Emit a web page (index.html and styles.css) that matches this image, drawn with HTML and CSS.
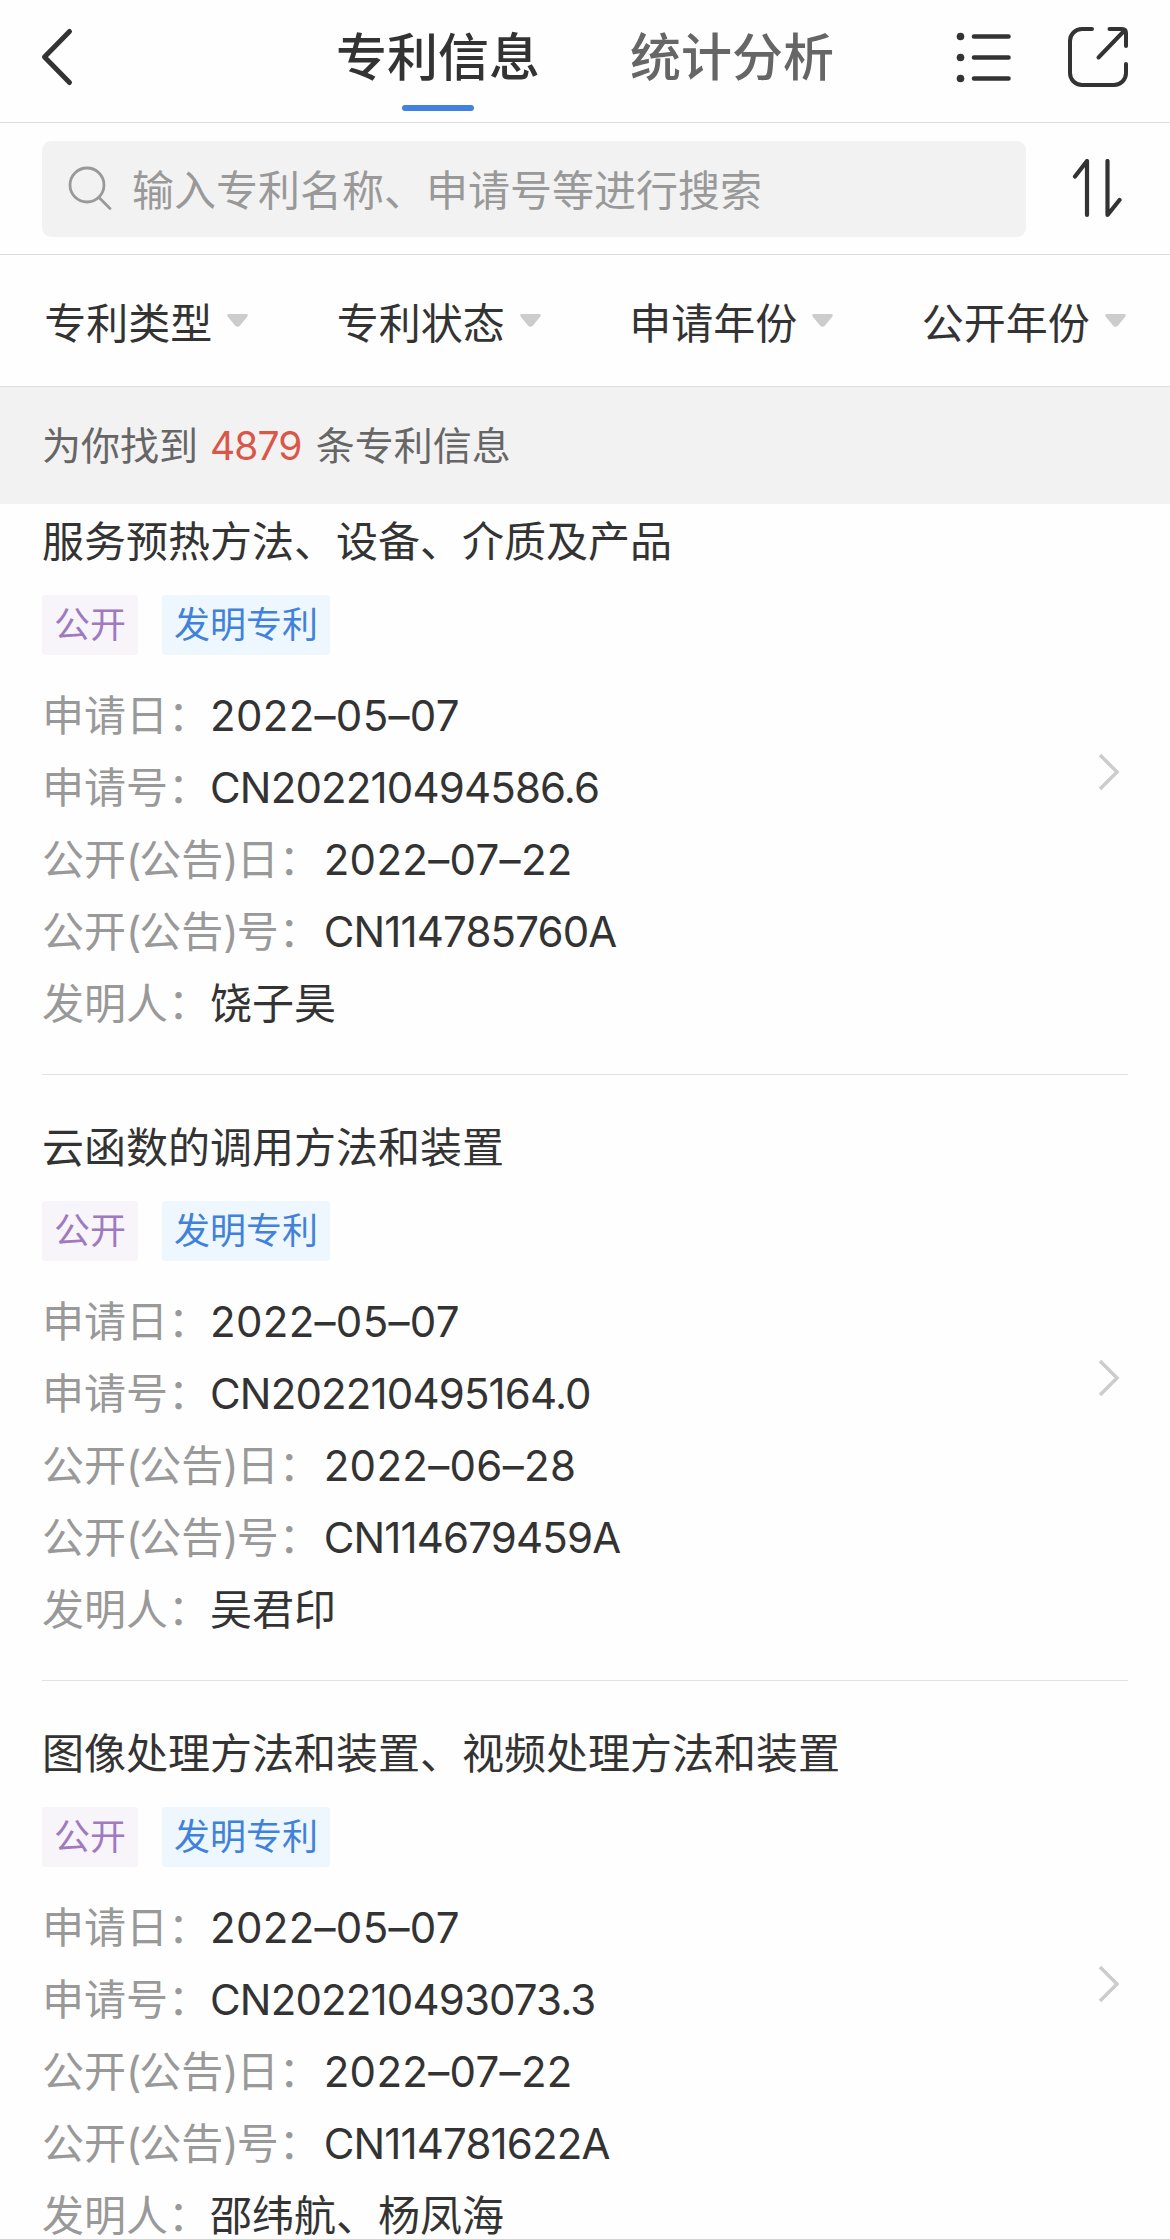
FILE: index.html
```html
<!DOCTYPE html>
<html lang="zh-CN">
<head>
    <meta charset="UTF-8">
    <title>专利信息</title>
    <link rel="stylesheet" href="styles.css">
</head>
<body>
    <header class="header">
        <svg class="back" width="34" height="60" viewBox="0 0 34 60" fill="none" stroke="#333" stroke-width="5" stroke-linecap="round" stroke-linejoin="round"><path d="M29.500 4.500 4.500 30 29.500 55.500"/></svg>
        <nav class="tabs">
            <div class="tab active">专利信息</div>
            <div class="tab">统计分析</div>
        </nav>
        <div class="actions">
            <svg width="60" height="60" viewBox="0 0 60 60" fill="none" stroke="#333" stroke-width="4.600" stroke-linecap="round">
                <path d="M20 9.500H54.500M20 30.500H54.500M20 51.500H54.500"/>
                <g fill="#333" stroke="none"><circle cx="6.500" cy="9.500" r="3.800"/><circle cx="6.500" cy="30.500" r="3.800"/><circle cx="6.500" cy="51.500" r="3.800"/></g>
            </svg>
            <svg width="60" height="60" viewBox="0 0 60 60" fill="none" stroke="#333" stroke-width="4" stroke-linecap="round" stroke-linejoin="round">
                <path d="M24 2H14A12 12 0 0 0 2 14V46A12 12 0 0 0 14 58H46A12 12 0 0 0 58 46V37"/>
                <path d="M41.500 2H54Q58 2 58 6V19M56.500 3.500 30.500 30.500"/>
            </svg>
        </div>
    </header>

    <div class="search-bar">
        <div class="search-box">
            <svg width="44" height="46" viewBox="0 0 44 46" fill="none" stroke="#999" stroke-width="2.800" stroke-linecap="round"><circle cx="19" cy="20" r="17"/><path d="M31.500 33 42 43.500"/></svg>
            <span>输入专利名称、申请号等进行搜索</span>
        </div>
        <svg class="sort" width="50" height="60" viewBox="0 0 50 60" fill="none" stroke="#333" stroke-width="4.200" stroke-linecap="round" stroke-linejoin="round"><path d="M3 17.500 15 2V56M35.500 2V56L47.500 41"/></svg>
    </div>

    <div class="filters">
        <div class="filter">专利类型<svg class="arrow" viewBox="0 0 21 13"><path d="M2 0H19Q22 0 20 3L13 11.500Q10.500 14 8 11.500L1 3Q-1 0 2 0Z"/></svg></div>
        <div class="filter">专利状态<svg class="arrow" viewBox="0 0 21 13"><path d="M2 0H19Q22 0 20 3L13 11.500Q10.500 14 8 11.500L1 3Q-1 0 2 0Z"/></svg></div>
        <div class="filter">申请年份<svg class="arrow" viewBox="0 0 21 13"><path d="M2 0H19Q22 0 20 3L13 11.500Q10.500 14 8 11.500L1 3Q-1 0 2 0Z"/></svg></div>
        <div class="filter">公开年份<svg class="arrow" viewBox="0 0 21 13"><path d="M2 0H19Q22 0 20 3L13 11.500Q10.500 14 8 11.500L1 3Q-1 0 2 0Z"/></svg></div>
    </div>

    <div class="summary">为你找到<span class="count">4879</span>条专利信息</div>

    <main class="list">
        <div class="card">
            <div class="info">
                <div class="title">服务预热方法、设备、介质及产品</div>
                <div class="tags"><span class="tag open">公开</span><span class="tag type">发明专利</span></div>
                <div class="row"><span class="label">申请日：</span><span class="value date">2022–05–07</span></div>
                <div class="row"><span class="label">申请号：</span><span class="value code">CN202210494586.6</span></div>
                <div class="row"><span class="label wide">公开<i>(</i>公告<i>)</i>日：</span><span class="value date">2022–07–22</span></div>
                <div class="row"><span class="label wide">公开<i>(</i>公告<i>)</i>号：</span><span class="value code">CN114785760A</span></div>
                <div class="row"><span class="label">发明人：</span><span class="value">饶子昊</span></div>
            </div>
            <svg class="more" viewBox="0 0 24 40"><path d="M3 3 20 20 3 37"/></svg>
        </div>
        <div class="card">
            <div class="info">
                <div class="title">云函数的调用方法和装置</div>
                <div class="tags"><span class="tag open">公开</span><span class="tag type">发明专利</span></div>
                <div class="row"><span class="label">申请日：</span><span class="value date">2022–05–07</span></div>
                <div class="row"><span class="label">申请号：</span><span class="value code">CN202210495164.0</span></div>
                <div class="row"><span class="label wide">公开<i>(</i>公告<i>)</i>日：</span><span class="value date">2022–06–28</span></div>
                <div class="row"><span class="label wide">公开<i>(</i>公告<i>)</i>号：</span><span class="value code">CN114679459A</span></div>
                <div class="row"><span class="label">发明人：</span><span class="value">吴君印</span></div>
            </div>
            <svg class="more" viewBox="0 0 24 40"><path d="M3 3 20 20 3 37"/></svg>
        </div>
        <div class="card">
            <div class="info">
                <div class="title">图像处理方法和装置、视频处理方法和装置</div>
                <div class="tags"><span class="tag open">公开</span><span class="tag type">发明专利</span></div>
                <div class="row"><span class="label">申请日：</span><span class="value date">2022–05–07</span></div>
                <div class="row"><span class="label">申请号：</span><span class="value code">CN202210493073.3</span></div>
                <div class="row"><span class="label wide">公开<i>(</i>公告<i>)</i>日：</span><span class="value date">2022–07–22</span></div>
                <div class="row"><span class="label wide">公开<i>(</i>公告<i>)</i>号：</span><span class="value code">CN114781622A</span></div>
                <div class="row"><span class="label">发明人：</span><span class="value">邵纬航、杨凤海</span></div>
            </div>
            <svg class="more" viewBox="0 0 24 40"><path d="M3 3 20 20 3 37"/></svg>
        </div>
    </main>
</body>
</html>
```
FILE: styles.css
```css
* {
    box-sizing: border-box;
}
body {
    margin: 0;
    height: 2239px;
    display: flex;
    flex-direction: column;
    overflow: hidden;
    background-color: #fefefe;
    color: #333;
    font-family: Inter, 'Noto Sans CJK SC', sans-serif;
    font-size: 42px;
}
svg {
    display: block;
    flex: none;
}
.header {
    height: 123px;
    flex: none;
    display: flex;
    justify-content: space-between;
    padding: 27px 42px 0 40px;
    border-bottom: 1px solid #ddd;
}
.tabs {
    display: flex;
    gap: 90px;
    margin-left: 142px;
}
.tab {
    display: flex;
    flex-direction: column;
    align-items: center;
    height: 84px;
    line-height: 61px;
    font-size: 51px;
    font-weight: 500;
    color: #666;
    white-space: nowrap;
}
.tab.active {
    color: #333;
}
.tab.active::after {
    content: "";
    width: 72px;
    height: 6px;
    margin-top: 17px;
    border-radius: 3px;
    background-color: #4081e2;
}
.actions {
    display: flex;
    gap: 54px;
}
.search-bar {
    height: 132px;
    flex: none;
    display: flex;
    align-items: center;
    justify-content: space-between;
    padding: 0 48px 0 42px;
    border-bottom: 1px solid #ddd;
}
.search-box {
    width: 984px;
    height: 96px;
    display: flex;
    align-items: center;
    gap: 20px;
    padding: 0 0 2px 26px;
    border-radius: 9px;
    background-color: #f2f2f2;
    color: #999;
}
.filters {
    height: 132px;
    flex: none;
    display: grid;
    grid-template-columns: repeat(4, 1fr);
    padding-bottom: 1px;
    border-bottom: 1px solid #ddd;
}
.filter {
    display: flex;
    align-items: center;
    justify-content: center;
    gap: 15px;
}
.arrow {
    width: 21px;
    height: 13px;
    fill: #ccc;
}
.summary {
    height: 117px;
    flex: none;
    padding-left: 42px;
    line-height: 117px;
    font-size: 39px;
    color: #666;
    background-color: #f2f2f2;
}
.count {
    margin: 0 14px 0 12px;
    letter-spacing: -0.9px;
    color: #d9574a;
}
/* 列表已向上滚动一小段 */
.list {
    flex: 1;
    min-height: 0;
    padding: 0 42px;
    overflow: hidden;
}
.card {
    height: 606px;
    display: flex;
    align-items: center;
    justify-content: space-between;
    padding-right: 7px;
    border-bottom: 1px solid #e2e2e2;
}
.card:first-child {
    margin-top: -35px;
}
.info {
    height: 100%;
    padding-top: 43px;
}
.title {
    line-height: 60px;
}
.tags {
    display: flex;
    gap: 24px;
    margin: 23px 0 25px;
}
.tag {
    height: 60px;
    padding: 0 12px;
    line-height: 61px;
    font-size: 36px;
    border-radius: 3px;
}
.open {
    color: #a07abf;
    background-color: #f7f4fa;
}
.type {
    color: #4081da;
    background-color: #eef6fe;
}
.row {
    display: flex;
    height: 72px;
    line-height: 72px;
}
.label {
    color: #999;
}
.label i {
    font-style: normal;
    letter-spacing: -2px;
}
.label.wide {
    margin-right: 3px;
}
.date {
    letter-spacing: 0.3px;
}
.code {
    letter-spacing: -0.85px;
}
.more {
    width: 24px;
    height: 40px;
    fill: none;
    stroke: #ccc;
    stroke-width: 3.500;
}
```
